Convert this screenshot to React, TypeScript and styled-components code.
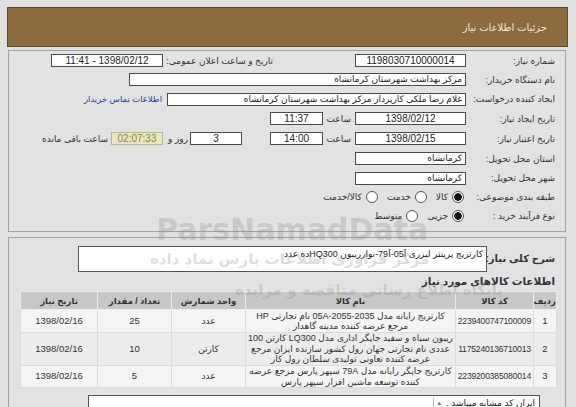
import styled, { createGlobalStyle } from 'styled-components'

const GlobalStyle = createGlobalStyle`
  html, body {
    margin: 0;
    padding: 0;
    background: #e0e0e0;
  }
  body {
    font-family: "Liberation Sans", "DejaVu Sans", sans-serif;
    color: #333;
  }
`

const Page = styled.div`
  position: relative;
  direction: rtl;
  width: 561px;
  padding: 7px 8px 0 7px;
  height: 400px;
  overflow: hidden;
`

const Header = styled.div`
  height: 38px;
  background: #8c6b3e;
  border: 1px solid #5e4a2c;
  display: flex;
  align-items: center;
  padding-right: 20px;
`

const Title = styled.span`
  color: #f3ead8;
  font-size: 10px;
`

const Panel = styled.div<{ $top?: number }>`
  margin-top: ${(p) => p.$top ?? 3}px;
  margin-left: 1px;
  margin-right: 2px;
  border: 1px solid #a3a3a3;
  background: #e2e2e2;
  padding: 0 0 6px 0;
`

const Row = styled.div<{ $h?: number }>`
  display: flex;
  align-items: center;
  height: ${(p) => p.$h ?? 19.3}px;
`

const Label = styled.div`
  width: 89px;
  padding-right: 10px;
  font-size: 9px;
  color: #333;
  white-space: nowrap;
`

const Field = styled.div<{ $w: number; $align?: string; $gap?: number }>`
  box-sizing: border-box;
  width: ${(p) => p.$w}px;
  height: 13px;
  margin-right: ${(p) => p.$gap ?? 0}px;
  border: 1px solid #4a4a4a;
  background: #fff;
  font-size: ${(p) => (p.$align === 'right' ? 9 : 10)}px;
  line-height: 11px;
  text-align: ${(p) => p.$align ?? 'center'};
  padding: 0 3px;
  white-space: nowrap;
  overflow: hidden;
  color: #222;
`

const Timer = styled(Field)`
  background: #e9e7bd;
  border-color: #b9b68f;
  color: #8a8658;
`

const Group = styled.div<{ $w: number; $gap: number }>`
  display: flex;
  align-items: center;
  justify-content: space-between;
  width: ${(p) => p.$w}px;
  margin-right: ${(p) => p.$gap}px;
`

const Text = styled.span<{ $w?: number; $gap?: number }>`
  display: inline-block;
  width: ${(p) => (p.$w ? `${p.$w}px` : 'auto')};
  margin-right: ${(p) => p.$gap ?? 0}px;
  font-size: 9px;
  white-space: nowrap;
  color: #333;
`

const Link = styled.span`
  margin-right: 5px;
  font-size: 8.5px;
  color: #2b3a9c;
  white-space: nowrap;
`

const Options = styled.div`
  display: flex;
  align-items: center;
  gap: 9px;
  margin-right: 2px;
`

const Option = styled.label`
  display: flex;
  align-items: center;
  gap: 4px;
  font-size: 9px;
  color: #333;
`

const Radio = styled.span<{ $on?: boolean }>`
  box-sizing: border-box;
  width: 12px;
  height: 12px;
  border-radius: 50%;
  border: 1px solid #555;
  background: ${(p) =>
    p.$on ? 'radial-gradient(circle, #111 0 3.5px, #fff 4px)' : '#fff'};
`

const DescRow = styled.div`
  display: flex;
  align-items: flex-start;
  margin-top: 8px;
`

const DescLabel = styled.div`
  width: 68px;
  padding: 7px 10px 0 0;
  font-size: 10px;
  font-weight: bold;
  color: #333;
  white-space: nowrap;
`

const DescBox = styled.div`
  box-sizing: border-box;
  width: 409px;
  height: 26px;
  border: 1px solid #555;
  background: #fff;
  font-size: 9px;
  padding: 2px 3px;
  color: #222;
`

const Section = styled.div`
  margin: 3px 10px 4px 0;
  font-size: 10.5px;
  font-weight: bold;
  color: #333;
`

const Grid = styled.table`
  margin-right: 8px;
  width: 536px;
  table-layout: fixed;
  border-collapse: collapse;
  border: 1px solid #bdbdbd;
  font-size: 9px;
  color: #333;
  th {
    background: #c7c7c7;
    height: 17px;
    font-weight: bold;
    font-size: 8.5px;
    border: 1px solid #ececec;
    padding: 0;
  }
  td {
    text-align: center;
    border: 1px solid #dcdcdc;
    padding: 0 2px;
    line-height: 10.5px;
  }
  tbody tr:nth-child(odd) td {
    background: #f4f4f4;
  }
  tbody tr:nth-child(even) td {
    background: #ececec;
  }
`

const Num = styled.span<{ $size?: number; $tight?: boolean }>`
  font-size: ${(p) => p.$size ?? 9.5}px;
  letter-spacing: ${(p) => (p.$tight ? '-0.2px' : 'normal')};
  white-space: nowrap;
`

const Note = styled.div`
  box-sizing: border-box;
  margin: 7px 25px 0 0;
  width: 452px;
  height: 22px;
  border: 1px solid #555;
  background: #fff;
  display: flex;
  align-items: flex-start;
  padding: 2px 4px;
  gap: 4px;
  font-size: 9px;
  color: #222;
`

const Arrow = styled.span`
  font-size: 6px;
  color: #777;
  border-left: 1px solid #bbb;
  padding-left: 2px;
  line-height: 11px;
`

const Mark = styled.div<{ $x: number; $y: number; $size: number }>`
  position: absolute;
  left: ${(p) => p.$x}px;
  top: ${(p) => p.$y}px;
  font-size: ${(p) => p.$size}px;
  font-family: "DejaVu Sans", "Liberation Sans", sans-serif;
  font-weight: bold;
  color: rgba(140, 140, 140, 0.3);
  white-space: nowrap;
  pointer-events: none;
  direction: ltr;
`

const items = [
  {
    n: '1',
    code: '2239400747100009',
    name: 'کارتریج رایانه مدل 05A-2055-2035 نام تجارتی HP مرجع عرضه کننده مدینه گاهدار',
    unit: 'عدد',
    qty: '25',
    h: 23,
  },
  {
    n: '2',
    code: '1175240136710013',
    name: 'ریبون سیاه و سفید جاپگر اداری مدل LQ300 کارتن 100 عددی نام تجارتی جهان رول کشور سازنده ایران مرجع عرضه کننده تعاونی تولیدی سلطان رول کار',
    unit: 'کارتن',
    qty: '10',
    h: 33,
  },
  {
    n: '3',
    code: '2239200385080014',
    name: 'کارتریج جاپگر رایانه مدل 79A سپهر پارس مرجع عرضه کننده توسعه ماشین افزار سپهر پارس',
    unit: 'عدد',
    qty: '5',
    h: 22,
  },
]

export default function App() {
  return (
    <Page>
      <GlobalStyle />
      <Header>
        <Title>جزئیات اطلاعات نیاز</Title>
      </Header>

      <Panel>
        <Row>
          <Label>شماره نیاز:</Label>
          <Field $w={111}>1198030710000014</Field>
          <Group $w={222} $gap={82}>
            <Text>تاریخ و ساعت اعلان عمومی:</Text>
            <Field $w={112}>1398/02/12 - 11:41</Field>
          </Group>
        </Row>
        <Row>
          <Label>نام دستگاه خریدار:</Label>
          <Field $w={337} $align="right">مرکز بهداشت شهرستان کرمانشاه</Field>
        </Row>
        <Row>
          <Label>ایجاد کننده درخواست:</Label>
          <Field $w={299} $align="right">غلام رضا ملکی کارپرداز مرکز بهداشت شهرستان کرمانشاه</Field>
          <Link>اطلاعات تماس خریدار</Link>
        </Row>
        <Row>
          <Label>تاریخ ایجاد نیاز:</Label>
          <Field $w={111}>1398/02/12</Field>
          <Text $w={28} $gap={4}>ساعت</Text>
          <Field $w={53}>11:37</Field>
        </Row>
        <Row $h={21}>
          <Label>تاریخ اعتبار نیاز:</Label>
          <Field $w={111}>1398/02/15</Field>
          <Text $w={28} $gap={4}>ساعت</Text>
          <Field $w={53}>14:00</Field>
          <Field $w={52} $gap={28}>3</Field>
          <Text $w={25} $gap={2}>روز و</Text>
          <Timer $w={52}>02:07:33</Timer>
          <Text $gap={3}>ساعت باقی مانده</Text>
        </Row>
        <Row>
          <Label>استان محل تحویل:</Label>
          <Field $w={111} $align="right">کرمانشاه</Field>
        </Row>
        <Row>
          <Label>شهر محل تحویل:</Label>
          <Field $w={111} $align="right">کرمانشاه</Field>
        </Row>
        <Row>
          <Label>طبقه بندی موضوعی:</Label>
          <Options>
            <Option><Radio $on />کالا</Option>
            <Option><Radio />خدمت</Option>
            <Option><Radio />کالا/خدمت</Option>
          </Options>
        </Row>
        <Row $h={18}>
          <Label>نوع فرآیند خرید :</Label>
          <Options>
            <Option><Radio $on />جزیی</Option>
            <Option><Radio />متوسط</Option>
          </Options>
        </Row>
      </Panel>

      <Panel $top={5}>
        <DescRow>
          <DescLabel>شرح کلی نیاز:</DescLabel>
          <DescBox>کارتریج پرینتر لیزری آ05-آ79-نوارریبون HQ300ده عدد</DescBox>
        </DescRow>
        <Section>اطلاعات کالاهای مورد نیاز</Section>
        <Grid>
          <colgroup>
            <col style={{ width: 23 }} />
            <col style={{ width: 78 }} />
            <col style={{ width: 210 }} />
            <col style={{ width: 74 }} />
            <col style={{ width: 74 }} />
            <col style={{ width: 77 }} />
          </colgroup>
          <thead>
            <tr>
              <th>ردیف</th>
              <th>کد کالا</th>
              <th>نام کالا</th>
              <th>واحد شمارش</th>
              <th>تعداد / مقدار</th>
              <th>تاریخ نیاز</th>
            </tr>
          </thead>
          <tbody>
            {items.map((it) => (
              <tr key={it.n} style={{ height: it.h }}>
                <td><Num>{it.n}</Num></td>
                <td><Num $size={8.6} $tight>{it.code}</Num></td>
                <td>{it.name}</td>
                <td>{it.unit}</td>
                <td><Num>{it.qty}</Num></td>
                <td><Num>1398/02/16</Num></td>
              </tr>
            ))}
          </tbody>
        </Grid>
        <Note>
          <span>ایران کد مشابه میباشد .</span>
          <Arrow>▲</Arrow>
        </Note>
      </Panel>

      <Mark $x={156} $y={212} $size={30}>ParsNamadData</Mark>
      <Mark $x={150} $y={250} $size={15}>مرکز فراوری اطلاعات پارس نماد داده</Mark>
      <Mark $x={235} $y={281} $size={15}>پایگاه اطلاع رسانی مناقصه و مزایده</Mark>
    </Page>
  )
}
